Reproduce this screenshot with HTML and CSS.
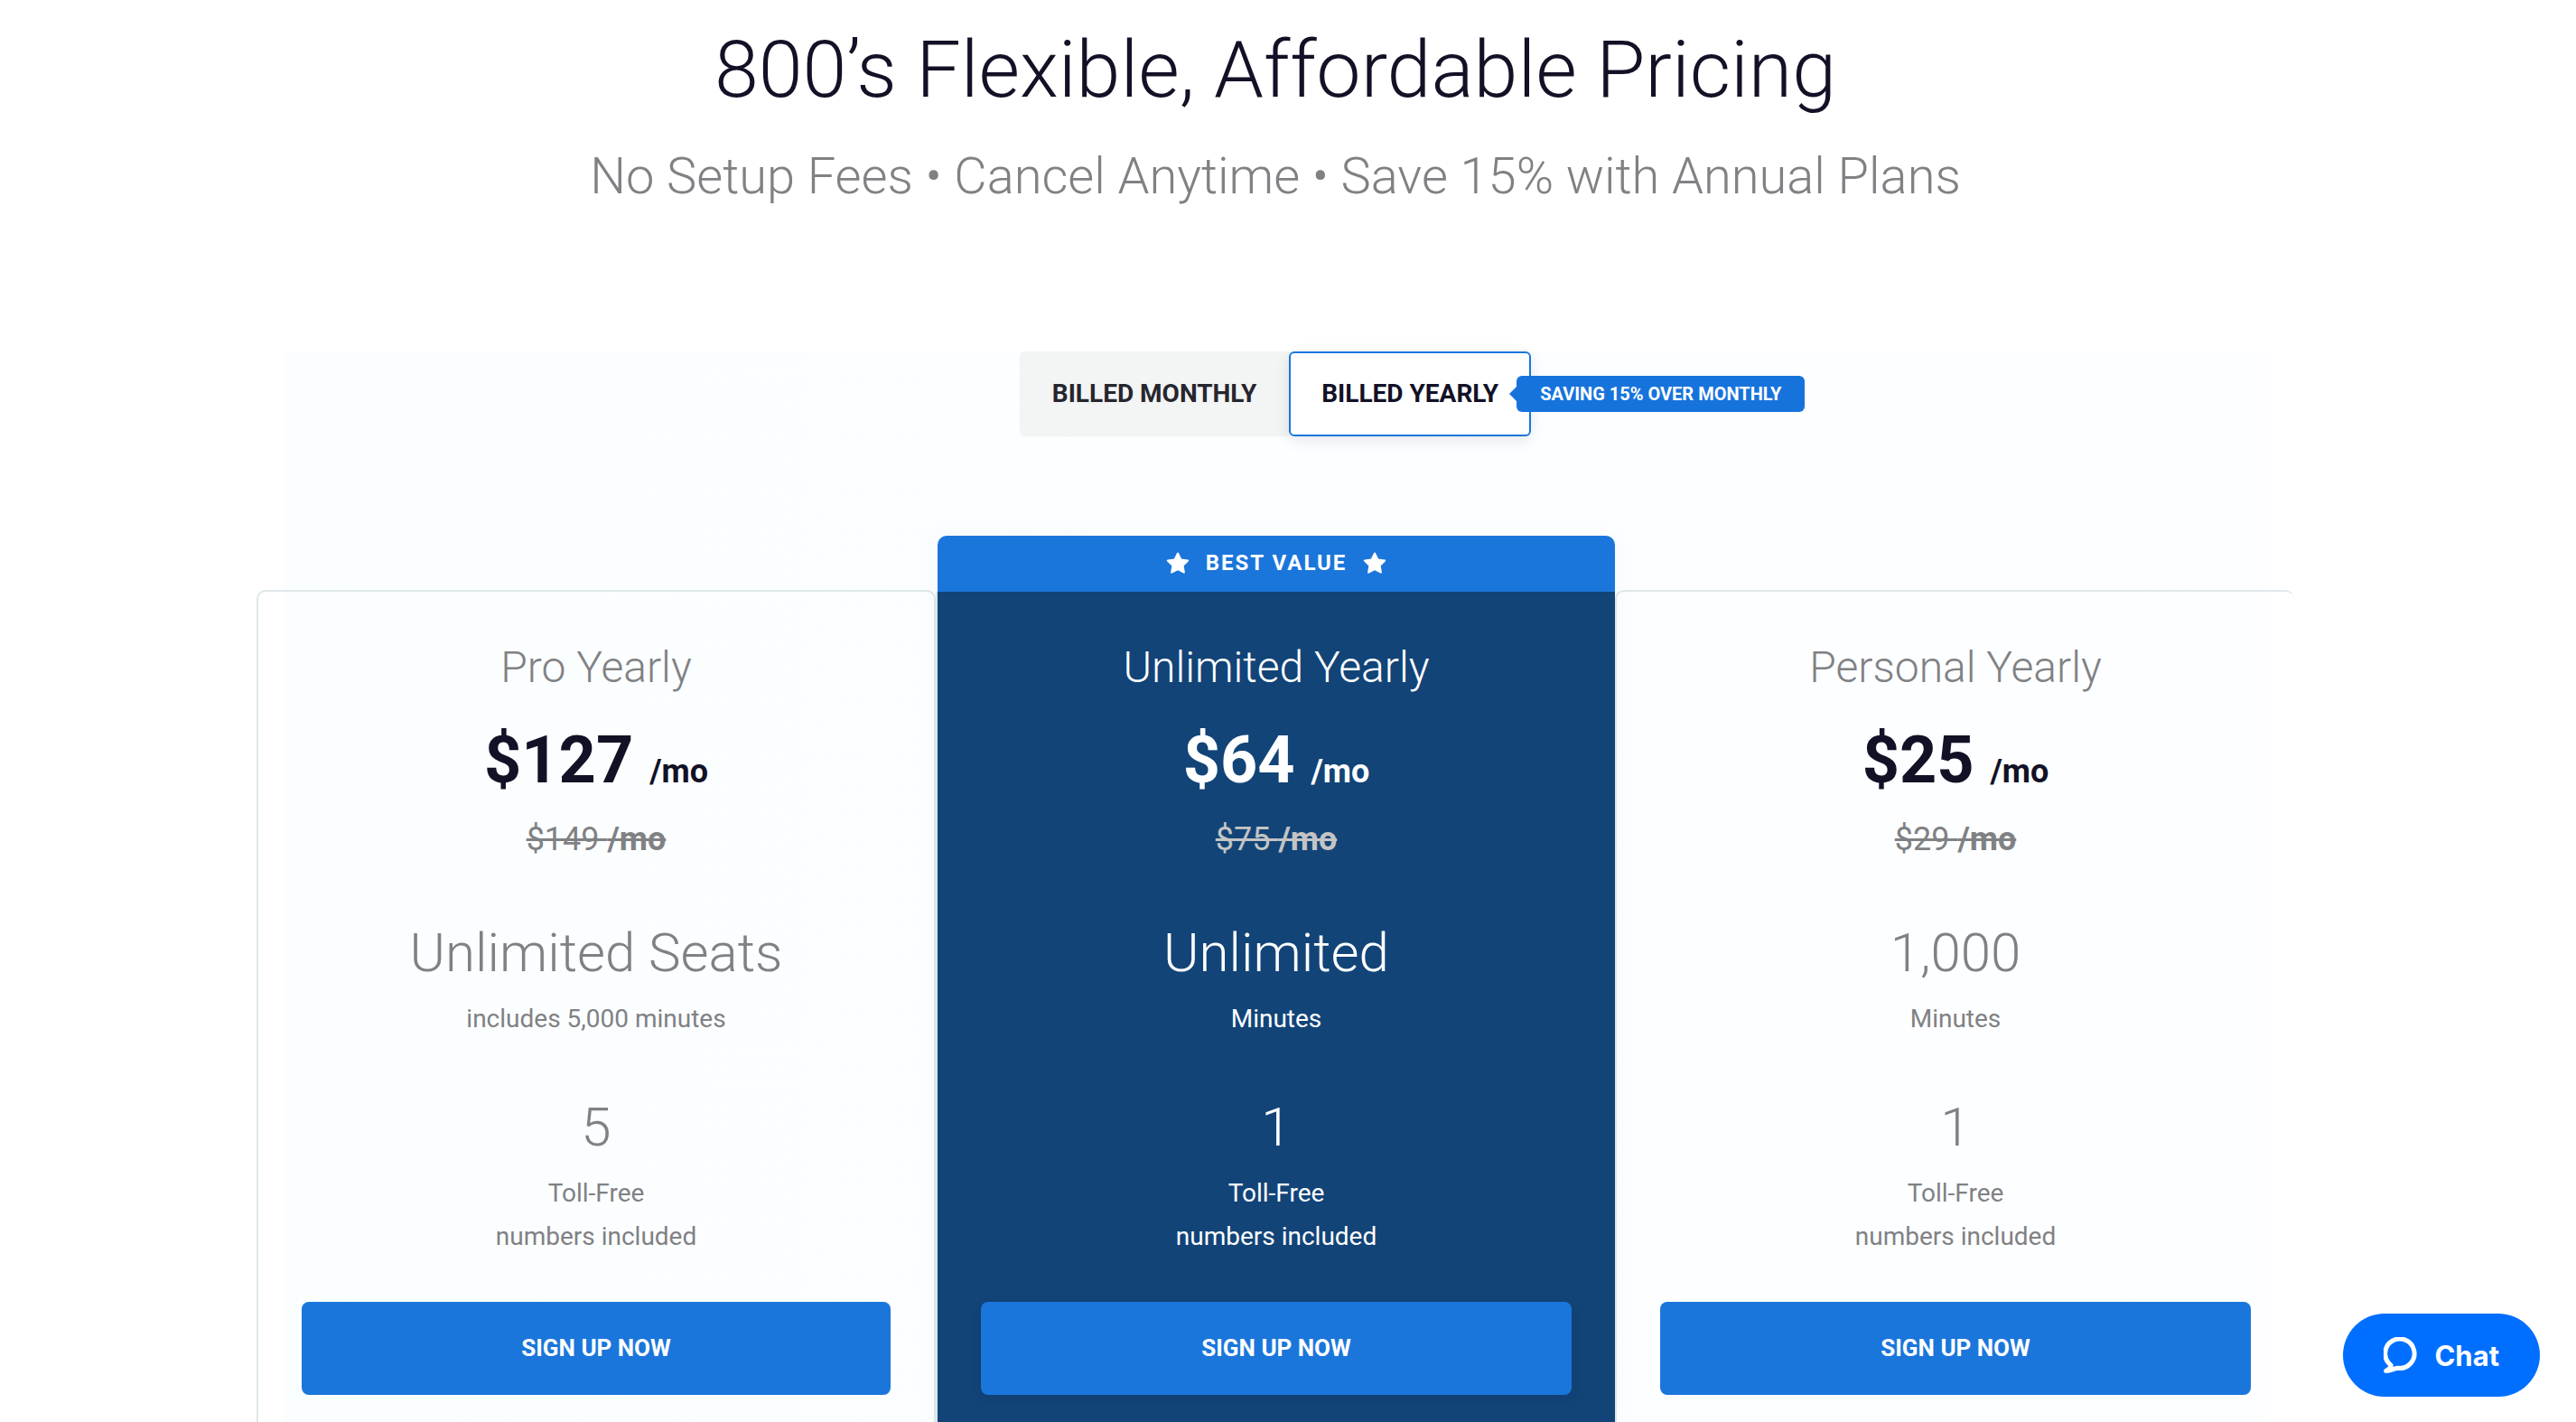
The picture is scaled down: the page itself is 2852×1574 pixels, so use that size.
FILE: index.html
```html
<!DOCTYPE html>
<html lang="en">
<head>
    <meta charset="UTF-8">
    <meta name="viewport" content="width=device-width, initial-scale=1.0">
    <title>Pricing</title>
    <link rel="stylesheet" href="styles.css">
</head>
<body>
    <main class="pricing">
        <header>
            <h1>800’s Flexible, Affordable Pricing</h1>
            <p class="subtitle">No Setup Fees • Cancel Anytime • Save 15% with Annual Plans</p>
        </header>

        <section class="plans">
            <div class="billing">
                <button type="button" class="billing-option">BILLED MONTHLY</button>
                <button type="button" class="billing-option active">BILLED YEARLY</button>
                <span class="saving">SAVING 15% OVER MONTHLY</span>
            </div>

            <div class="cards">
                <article class="card card-first">
                    <h2>Pro Yearly</h2>
                    <p class="price">$127 <small>/mo</small></p>
                    <p class="old-price">$149 <b>/mo</b></p>
                    <p class="amount">Unlimited Seats</p>
                    <p class="label">includes 5,000 minutes</p>
                    <p class="amount">5</p>
                    <p class="label">Toll-Free<br>numbers included</p>
                    <button type="button" class="signup">SIGN UP NOW</button>
                </article>

                <div class="best">
                    <div class="ribbon">
                        <svg class="star" viewBox="0 0 26 24"><path d="M13 1.5l3.5 7 7.7 1.1-5.6 5.4 1.3 7.6-6.9-3.6-6.9 3.6 1.3-7.6L1.8 9.6l7.7-1.1z"/></svg>
                        <span>BEST VALUE</span>
                        <svg class="star" viewBox="0 0 26 24"><path d="M13 1.5l3.5 7 7.7 1.1-5.6 5.4 1.3 7.6-6.9-3.6-6.9 3.6 1.3-7.6L1.8 9.6l7.7-1.1z"/></svg>
                    </div>
                    <article class="card card-best">
                        <h2>Unlimited Yearly</h2>
                        <p class="price">$64 <small>/mo</small></p>
                        <p class="old-price">$75 <b>/mo</b></p>
                        <p class="amount">Unlimited</p>
                        <p class="label">Minutes</p>
                        <p class="amount">1</p>
                        <p class="label">Toll-Free<br>numbers included</p>
                        <button type="button" class="signup">SIGN UP NOW</button>
                    </article>
                </div>

                <article class="card card-last">
                    <h2>Personal Yearly</h2>
                    <p class="price">$25 <small>/mo</small></p>
                    <p class="old-price">$29 <b>/mo</b></p>
                    <p class="amount">1,000</p>
                    <p class="label">Minutes</p>
                    <p class="amount">1</p>
                    <p class="label">Toll-Free<br>numbers included</p>
                    <button type="button" class="signup">SIGN UP NOW</button>
                </article>
            </div>
        </section>
    </main>

    <button type="button" class="chat">
        <svg class="chat-icon" viewBox="0 0 38 40"><path d="M8.2 31.2A16.2 16.2 0 1 1 16 34.3C11 34.6 8 37.6 2.6 37.4 6.2 35.6 8 34 8.2 31.2z"/></svg>
        <span>Chat</span>
    </button>
</body>
</html>
```
FILE: styles.css
```css
* {
    box-sizing: border-box;
}

body {
    font-family: Roboto, "Liberation Sans", sans-serif;
    background-color: #ffffff;
    color: #121126;
    margin: 0;
}

h1, h2, p {
    margin: 0;
}

button {
    font-family: inherit;
    cursor: pointer;
}

.pricing {
    display: flex;
    flex-direction: column;
    min-height: 100vh;
    padding: 29px 28px 0 0;
    text-align: center;
}

h1 {
    font-size: 88px;
    line-height: 96px;
    font-weight: 300;
}

.subtitle {
    margin-top: 38px;
    font-size: 56px;
    line-height: 64px;
    font-weight: 300;
    color: #808184;
}

.plans {
    flex: 1;
    display: flex;
    flex-direction: column;
    width: calc(100% - 60px);
    max-width: 2196px;
    margin: 162px auto 0;
    background: linear-gradient(90deg, #fbfeff, #fcfeff 50%, #fdfeff);
}

/* billing switch */
.billing {
    position: relative;
    display: flex;
    align-self: center;
}

.billing-option {
    height: 94px;
    padding: 0 36px 2px;
    border: none;
    border-radius: 6px 0 0 6px;
    background-color: #f3f4f4;
    color: #26262e;
    font-size: 28px;
    font-weight: 700;
}

.billing-option.active {
    border: 2px solid #1b76db;
    border-radius: 6px;
    background-color: #ffffff;
    color: #121126;
    padding: 0 34px 2px;
    box-shadow: 0 4px 16px rgba(18, 17, 38, 0.1);
}

.saving {
    position: absolute;
    left: 100%;
    top: 27px;
    margin-left: -16px;
    padding: 0 26px;
    border-radius: 6px;
    background-color: #1773dc;
    color: #ffffff;
    font-size: 20px;
    line-height: 40px;
    font-weight: 700;
    white-space: nowrap;
}

.saving::before {
    content: "";
    position: absolute;
    left: -8px;
    top: 12px;
    border: 8px solid transparent;
    border-left: none;
    border-right-color: #1773dc;
}

/* plan cards */
.cards {
    flex: 1;
    display: grid;
    grid-template-columns: repeat(3, 1fr);
    margin: 110px -30px 0;
}

.card {
    padding: 52px 48px 28px;
    border-left: 2px solid #dfe7ea;
}

.card-first,
.card-last {
    margin-top: 60px;
    border-top: 2px solid #dfe7ea;
    border-radius: 10px 10px 0 0;
}

.card-first {
    border-right: 2px solid #dfe7ea;
}

.best {
    position: relative;
    display: flex;
    flex-direction: column;
    box-shadow: 0 0 30px rgba(18, 17, 38, 0.03);
}

.ribbon {
    display: flex;
    justify-content: center;
    align-items: center;
    gap: 18px;
    height: 62px;
    margin-left: 2px;
    padding-bottom: 2px;
    border-radius: 10px 10px 0 0;
    background-color: #1b76db;
    color: #ffffff;
    font-size: 24px;
    font-weight: 700;
    letter-spacing: 2px;
}

.star {
    width: 26px;
    height: 24px;
    fill: #ffffff;
    stroke: #ffffff;
    stroke-width: 2;
    stroke-linejoin: round;
}

.card-best {
    flex: 1;
    background-color: #124478;
    background-clip: padding-box;
    color: #ffffff;
}

h2 {
    font-size: 48px;
    line-height: 64px;
    font-weight: 300;
    color: #808184;
}

.price {
    margin-top: 31px;
    font-size: 72px;
    line-height: 80px;
    font-weight: 700;
}

.price small {
    font-size: 36px;
    line-height: 1;
    font-weight: 700;
}

.old-price {
    margin: 23px 0 66px;
    font-size: 36px;
    line-height: 48px;
    font-weight: 400;
    color: #808184;
    text-decoration: line-through;
}

.old-price b {
    font-weight: 700;
}

.amount {
    font-size: 60px;
    line-height: 72px;
    font-weight: 300;
    color: #808184;
}

.label {
    margin: 13px 0 60px;
    font-size: 28px;
    line-height: 48px;
    color: #808184;
}

.card-best h2,
.card-best .amount,
.card-best .label {
    color: #ffffff;
}

.card-best .old-price {
    color: #c4c4c4;
}

.signup {
    display: block;
    width: 100%;
    height: 103px;
    margin-top: -12px;
    padding: 0 0 2px;
    border: none;
    border-radius: 8px;
    background-color: #1b76db;
    color: #ffffff;
    font-size: 26px;
    font-weight: 700;
}

.card-best .signup {
    box-shadow: 0 4px 12px rgba(18, 17, 38, 0.1);
}

/* chat launcher */
.chat {
    position: fixed;
    right: 40px;
    bottom: 28px;
    display: flex;
    align-items: center;
    gap: 18px;
    height: 92px;
    padding: 0 45px;
    border: none;
    border-radius: 46px;
    background-color: #006fff;
    color: #ffffff;
    font-family: Inter, sans-serif;
    font-size: 31px;
    font-weight: 700;
}

.chat-icon {
    width: 38px;
    height: 40px;
    fill: none;
    stroke: #ffffff;
    stroke-width: 5;
    stroke-linejoin: round;
}
```
